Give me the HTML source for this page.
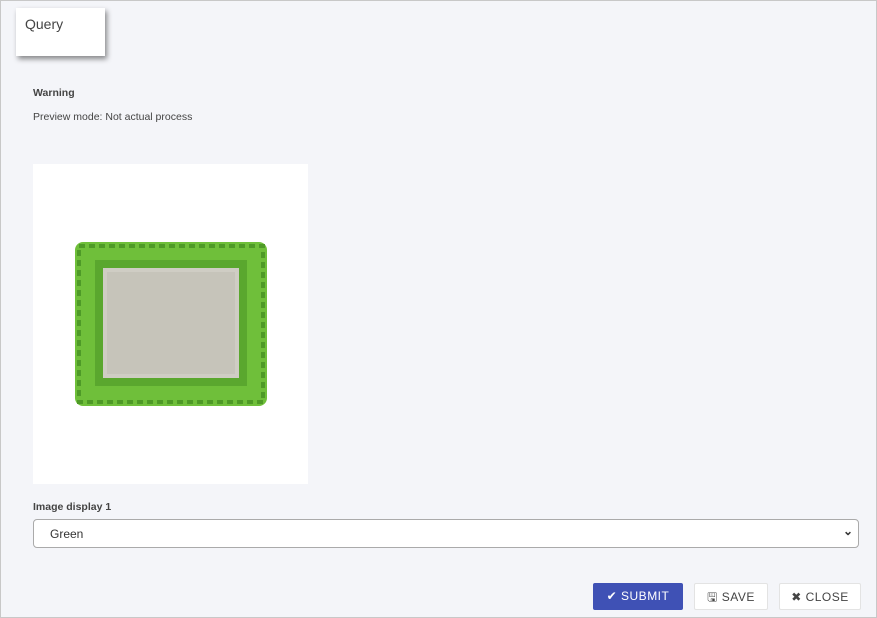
<!DOCTYPE html>
<html><head><style>
*{box-sizing:border-box}
body{margin:0;width:877px;height:618px;background:#f4f5f9;font-family:"Liberation Sans",sans-serif;color:#444;position:relative;overflow:hidden}
.outer{position:absolute;left:0;top:0;width:877px;height:618px;border:1px solid #c8c8c8}
.q{position:absolute;left:16px;top:8px;width:89px;height:48px;background:#fff;box-shadow:2px 3px 5px rgba(0,0,0,.45);font-size:14px;padding:8px 9px;color:#444}
.t{position:absolute;font-size:10.5px}
.img{position:absolute;left:33px;top:164px;width:275px;height:320px;background:#fff}
.sel{position:absolute;left:33px;top:519px;width:826px;height:29px;background:#fff;border:1px solid #aaa;border-radius:4px;font-size:12px;padding:7px 16px;color:#333}
.btn{position:absolute;top:583px;height:27px;font-size:12px;letter-spacing:.5px;text-align:center;line-height:27px;border-radius:2px}
</style></head><body>
<div class="outer"></div>
<div class="q">Query</div>
<div class="t" style="left:33px;top:87px;font-weight:bold">Warning</div>
<div class="t" style="left:33px;top:111px">Preview mode: Not actual process</div>
<div class="img">
<svg width="275" height="320" style="position:absolute;left:0;top:0">
<rect x="42" y="78" width="192" height="164" rx="8" fill="#6fbf3a"/>
<rect x="46" y="82" width="184" height="156" fill="none" stroke="#4e9a27" stroke-width="4" stroke-dasharray="6 4"/>
<rect x="62" y="96" width="152" height="126" fill="#5aa72e"/>
<rect x="70" y="104" width="136" height="110" fill="#cfcdc4"/>
<rect x="74" y="108" width="128" height="102" fill="#c6c4ba"/>
</svg>
</div>
<div class="t" style="left:33px;top:501px;font-weight:bold">Image display 1</div>
<div class="sel">Green<span style="position:absolute;right:5px;top:4px;font-size:12px;font-weight:bold">&#8964;</span></div>
<div class="btn" style="left:593px;width:90px;background:#3f51b5;color:#fff">✔ SUBMIT</div>
<div class="btn" style="left:694px;width:74px;background:#fff;border:1px solid #e3e3e3;color:#444">🖫 SAVE</div>
<div class="btn" style="left:779px;width:82px;background:#fff;border:1px solid #e3e3e3;color:#444">✖ CLOSE</div>
</body></html>
